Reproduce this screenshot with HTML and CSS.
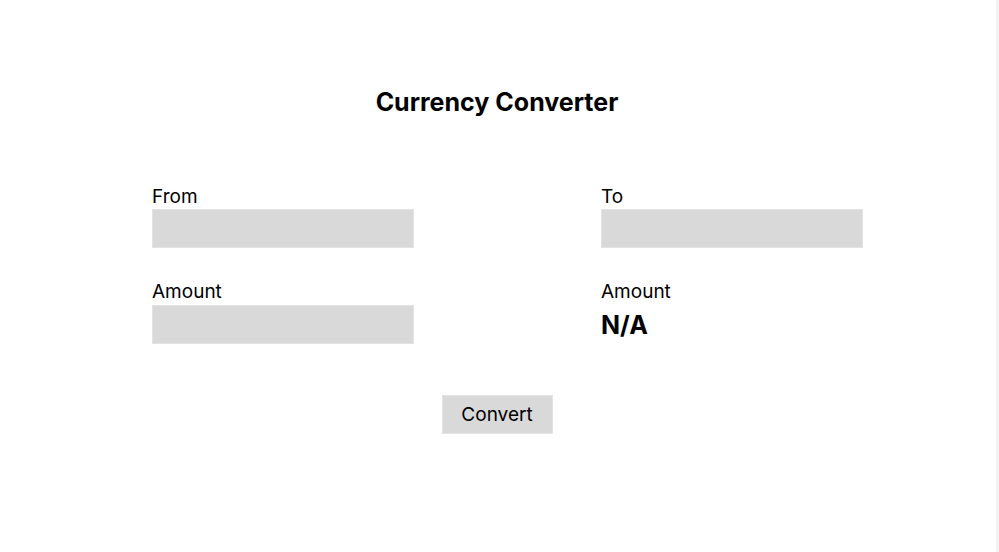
FILE: index.html
```html
<!DOCTYPE html>
<html lang="en">
<head>
  <meta charset="UTF-8">
  <title>Currency Converter</title>
  <link rel="stylesheet" href="styles.css">
</head>
<body>

  <div class="page">
    <h1>Currency Converter</h1>

    <div class="form-grid">
      <div class="field">
        <label for="from">From</label>
        <input type="text" id="from">
      </div>
      <div class="field">
        <label for="to">To</label>
        <input type="text" id="to">
      </div>

      <div class="field field-second">
        <label for="amount">Amount</label>
        <input type="text" id="amount">
      </div>
      <div class="field field-second">
        <label>Amount</label>
        <div class="result" id="result">N/A</div>
      </div>
    </div>

    <div class="actions">
      <button class="convert-btn">Convert</button>
    </div>
  </div>

</body>
</html>
```

FILE: styles.css
```css
html, body {
  margin: 0;
  height: 100%;
}

body {
  font-family: Inter, "Noto Sans", sans-serif;
  background-color: #fff;
  color: #000;
}

.page {
  box-sizing: border-box;
  width: 999px;
  height: 100%;
  padding-top: 87px;
  padding-right: 2px;
  border-right: 3px solid #f2f2f2;
}

h1 {
  margin: 0 0 68px;
  font-size: 25px;
  line-height: 30px;
  font-weight: 700;
  text-align: center;
}

.form-grid {
  display: grid;
  grid-template-columns: 262px 262px;
  column-gap: 187px;
  row-gap: 31px;
  margin-left: 152px;
}

.field label {
  display: block;
  font-size: 19px;
  line-height: 24px;
}

.field-second label {
  line-height: 26px;
}

.field input {
  display: block;
  box-sizing: border-box;
  width: 262px;
  height: 39px;
  margin: 0;
  background-color: #d9d9d9;
  border: 1px solid #e3e3e3;
  outline: none;
}

.result {
  margin-top: 5px;
  font-size: 25px;
  line-height: 30px;
  font-weight: 700;
}

.actions {
  display: flex;
  justify-content: center;
  margin-top: 51px;
}

.convert-btn {
  width: 111px;
  height: 39px;
  padding: 0;
  background-color: #d9d9d9;
  border: 1px solid #e3e3e3;
  font-family: Inter, "Noto Sans", sans-serif;
  font-size: 19px;
  color: #000;
}
```
